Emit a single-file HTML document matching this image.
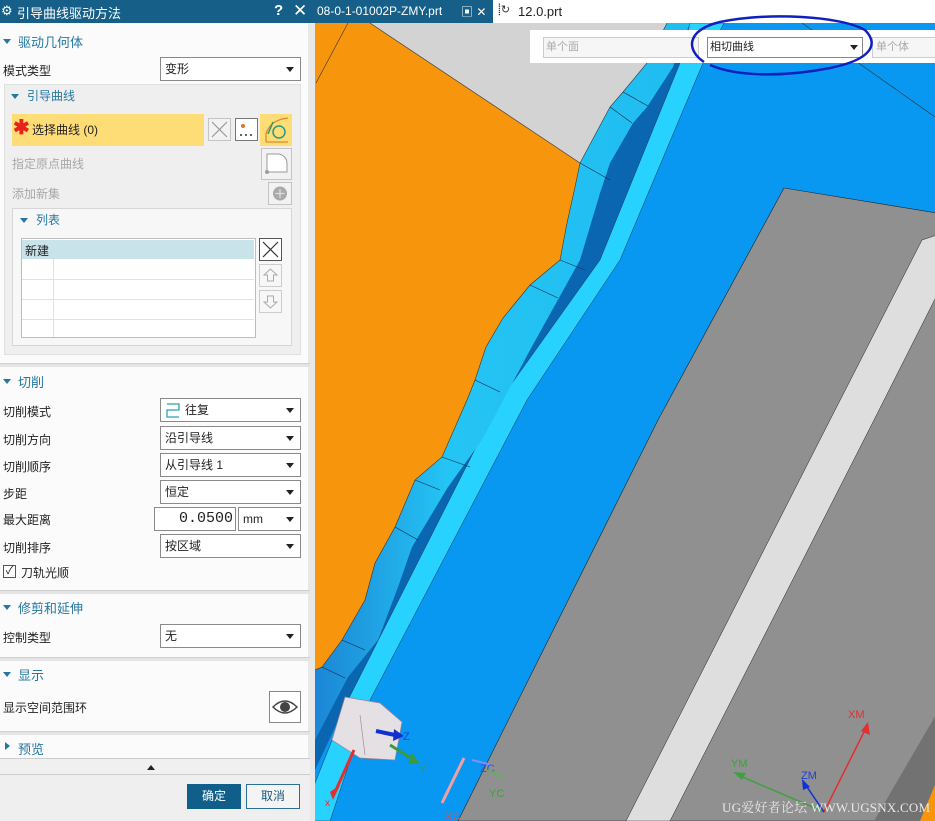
<!DOCTYPE html>
<html><head><meta charset="utf-8"><style>
*{margin:0;padding:0;box-sizing:border-box}
body{width:935px;height:821px;overflow:hidden;position:relative;background:#f0f0f0;font-family:"Liberation Sans","Noto Sans CJK SC",sans-serif;font-size:12px;color:#222}
.a{position:absolute;white-space:nowrap}
.hdr{color:#2478a0;font-size:13px}
.tri{position:absolute;width:0;height:0;border-left:4px solid transparent;border-right:4px solid transparent;border-top:5px solid #2478a0}
.dd{position:absolute;background:#fff;border:1px solid #8a8a8a;height:24px;line-height:22px;padding-left:4px}
.dd:after{content:"";position:absolute;right:6px;top:9px;border-left:4px solid transparent;border-right:4px solid transparent;border-top:5px solid #222}
.sep{position:absolute;left:0;width:310px;height:4px;background:#e4e4e4;border-top:1px solid #d0d0d0}
</style></head><body>
<!-- panel -->
<div class="a" style="left:0;top:0;width:310px;height:821px;background:#fbfbfb"></div>
<div class="a" style="left:308px;top:23px;width:7px;height:798px;background:#e8e8e8"></div>
<div class="a" style="left:0;top:0;width:310px;height:23px;background:#155f88"></div>
<div class="a" style="left:1px;top:3px;color:#fff;font-size:13px">⚙</div>
<div class="a" style="left:17px;top:3px;color:#fff;font-size:13px">引导曲线驱动方法</div>
<div class="a" style="left:274px;top:2px;color:#fff;font-size:15px;font-weight:bold">?</div>
<div class="a" style="left:293px;top:1px;color:#fff;font-size:17px">✕</div>

<div class="tri" style="left:3px;top:39px"></div><div class="a hdr" style="left:18px;top:32px">驱动几何体</div>
<div class="a" style="left:3px;top:62px">模式类型</div>
<div class="dd" style="left:160px;top:57px;width:141px">变形</div>

<div class="a" style="left:4px;top:84px;width:297px;height:271px;background:#efefef;border:1px solid #e0e0e0"></div>
<div class="tri" style="left:11px;top:94px"></div><div class="a hdr" style="left:27px;top:87px;font-size:12px">引导曲线</div>
<div class="a" style="left:12px;top:114px;width:192px;height:32px;background:#fedd77"></div>
<div class="a" style="left:13px;top:115px;color:#e8231c;font-size:20px;font-weight:bold">✱</div>
<div class="a" style="left:32px;top:121px">选择曲线 (0)</div>
<div class="a" style="left:208px;top:118px;width:23px;height:23px;border:1px solid #c4c4c4;background:#f2f2f2"></div>
<svg class="a" style="left:208px;top:118px" width="23" height="23"><path d="M4 4L19 19M19 4L4 19" stroke="#999" stroke-width="1.2"/></svg>
<div class="a" style="left:235px;top:118px;width:23px;height:23px;border:1px solid #777;background:#fff"></div>
<svg class="a" style="left:235px;top:118px" width="23" height="23"><circle cx="8" cy="8" r="2" fill="#d5762a"/><circle cx="6" cy="17" r="1" fill="#333"/><circle cx="11" cy="17" r="1" fill="#333"/><circle cx="16" cy="17" r="1" fill="#333"/></svg>
<div class="a" style="left:260px;top:114px;width:32px;height:32px;background:#fedd77"></div>
<svg class="a" style="left:260px;top:114px" width="32" height="32"><path d="M6 28V20Q10 6 28 4" stroke="#e08a2a" fill="none" stroke-width="1.3"/><path d="M6 28H28" stroke="#e08a2a" stroke-width="1.3"/><path d="M8 20L13 8" stroke="#2a9a7a" stroke-width="1.5"/><circle cx="19" cy="18" r="6" stroke="#2a9a7a" fill="none" stroke-width="1.5"/></svg>
<div class="a" style="left:12px;top:155px;color:#a8a8a8">指定原点曲线</div>
<div class="a" style="left:261px;top:148px;width:31px;height:32px;border:1px solid #c4c4c4;background:#f2f2f2"></div>
<svg class="a" style="left:261px;top:148px" width="31" height="32"><path d="M6 24V6H18Q26 8 26 16V24Z" fill="#fff" stroke="#999"/><circle cx="6" cy="24" r="2" fill="#a99"/></svg>
<div class="a" style="left:12px;top:185px;color:#a8a8a8">添加新集</div>
<div class="a" style="left:268px;top:182px;width:24px;height:23px;border:1px solid #c4c4c4;background:#f2f2f2"></div>
<svg class="a" style="left:268px;top:182px" width="24" height="23"><circle cx="12" cy="11.5" r="7" fill="#aaa"/><path d="M12 7V16M7.5 11.5H16.5" stroke="#ddd" stroke-width="1.3"/></svg>

<div class="a" style="left:12px;top:208px;width:280px;height:138px;background:#f7f7f7;border:1px solid #d6d6d6"></div>
<div class="tri" style="left:20px;top:218px"></div><div class="a hdr" style="left:36px;top:211px;font-size:12px">列表</div>
<div class="a" style="left:21px;top:238px;width:235px;height:100px;background:#fff;border:1px solid #bdbdbd"></div>
<div class="a" style="left:22px;top:240px;width:232px;height:19px;background:#c9e3ea"></div>
<div class="a" style="left:25px;top:242px">新建</div>
<div class="a" style="left:53px;top:259px;width:1px;height:78px;background:#e2e2e2"></div>
<div class="a" style="left:22px;top:279px;width:232px;height:1px;background:#e2e2e2"></div>
<div class="a" style="left:22px;top:299px;width:232px;height:1px;background:#e2e2e2"></div>
<div class="a" style="left:22px;top:319px;width:232px;height:1px;background:#e2e2e2"></div>
<div class="a" style="left:259px;top:238px;width:23px;height:23px;border:1px solid #555;background:#fff"></div>
<svg class="a" style="left:259px;top:238px" width="23" height="23"><path d="M4 4L19 19M19 4L4 19" stroke="#333" stroke-width="1.2"/></svg>
<div class="a" style="left:259px;top:264px;width:23px;height:23px;border:1px solid #ccc"></div>
<svg class="a" style="left:259px;top:264px" width="23" height="23"><path d="M11.5 5L5 11H8.5V17H14.5V11H18Z" fill="none" stroke="#aaa"/></svg>
<div class="a" style="left:259px;top:290px;width:23px;height:23px;border:1px solid #ccc"></div>
<svg class="a" style="left:259px;top:290px" width="23" height="23"><path d="M11.5 18L5 12H8.5V6H14.5V12H18Z" fill="none" stroke="#aaa"/></svg>

<div class="sep" style="top:363px"></div>
<div class="tri" style="left:3px;top:379px"></div><div class="a hdr" style="left:18px;top:372px">切削</div>
<div class="a" style="left:3px;top:403px">切削模式</div>
<div class="dd" style="left:160px;top:398px;width:141px;padding-left:24px">往复</div>
<svg class="a" style="left:165px;top:402px" width="16" height="17"><path d="M2 2H14V8H2V15H14" fill="none" stroke="#2aa0b0" stroke-width="1.3"/></svg>
<div class="a" style="left:3px;top:431px">切削方向</div>
<div class="dd" style="left:160px;top:426px;width:141px">沿引导线</div>
<div class="a" style="left:3px;top:458px">切削顺序</div>
<div class="dd" style="left:160px;top:453px;width:141px">从引导线 1</div>
<div class="a" style="left:3px;top:485px">步距</div>
<div class="dd" style="left:160px;top:480px;width:141px">恒定</div>
<div class="a" style="left:3px;top:511px">最大距离</div>
<div class="a" style="left:154px;top:507px;width:82px;height:24px;border:1px solid #8a8a8a;background:#fff;font-family:'Liberation Mono',monospace;font-size:15px;line-height:22px;text-align:right;padding-right:2px;overflow:hidden">0.0500</div>
<div class="dd" style="left:238px;top:507px;width:63px">mm</div>
<div class="a" style="left:3px;top:539px">切削排序</div>
<div class="dd" style="left:160px;top:534px;width:141px">按区域</div>
<div class="a" style="left:3px;top:565px;width:13px;height:13px;border:1px solid #555;background:#fff;font-size:11px;line-height:11px;text-align:center">✓</div>
<div class="a" style="left:21px;top:564px">刀轨光顺</div>

<div class="sep" style="top:590px"></div>
<div class="tri" style="left:3px;top:605px"></div><div class="a hdr" style="left:18px;top:598px">修剪和延伸</div>
<div class="a" style="left:3px;top:629px">控制类型</div>
<div class="dd" style="left:160px;top:624px;width:141px">无</div>

<div class="sep" style="top:657px"></div>
<div class="tri" style="left:3px;top:672px"></div><div class="a hdr" style="left:18px;top:665px">显示</div>
<div class="a" style="left:3px;top:699px">显示空间范围环</div>
<div class="a" style="left:269px;top:691px;width:32px;height:32px;border:1px solid #888;background:#fff"></div>
<svg class="a" style="left:269px;top:691px" width="32" height="32"><path d="M4 16Q16 4 28 16Q16 28 4 16Z" fill="none" stroke="#444" stroke-width="1.5"/><circle cx="16" cy="16" r="5" fill="#444"/></svg>

<div class="sep" style="top:731px"></div>
<div class="a" style="left:5px;top:742px;border-top:4px solid transparent;border-bottom:4px solid transparent;border-left:5px solid #2478a0;width:0;height:0"></div>
<div class="a hdr" style="left:18px;top:739px">预览</div>
<div class="a" style="left:0;top:758px;width:310px;height:17px;background:#f0f0f0;border-top:1px solid #ccc;border-bottom:1px solid #ccc"></div>
<div class="a" style="left:147px;top:765px;border-left:4px solid transparent;border-right:4px solid transparent;border-bottom:5px solid #222;width:0;height:0"></div>
<div class="a" style="left:0;top:775px;width:310px;height:46px;background:#efefef"></div>
<div class="a" style="left:187px;top:784px;width:54px;height:25px;background:#105f8a;color:#fff;text-align:center;line-height:25px">确定</div>
<div class="a" style="left:246px;top:784px;width:54px;height:25px;border:1px solid #2a6f95;background:#f4f4f4;color:#1a5a80;text-align:center;line-height:23px">取消</div>

<!-- tab bar -->
<div class="a" style="left:310px;top:0;width:625px;height:23px;background:#fff"></div>
<div class="a" style="left:310px;top:0;width:183px;height:23px;background:#155f88"></div>
<div class="a" style="left:317px;top:4px;color:#fff;font-size:12px">08-0-1-01002P-ZMY.prt</div>
<div class="a" style="left:461px;top:3px;color:#fff;font-size:12px">▣ ✕</div>
<div class="a" style="left:498px;top:2px;font-size:11px;color:#333">⸽↻</div>
<div class="a" style="left:518px;top:4px;font-size:13px;color:#222">12.0.prt</div>

<!-- viewport -->
<svg class="a" style="left:315px;top:23px" width="620" height="798" viewBox="315 23 620 798">
<defs>
<linearGradient id="bg1" x1="0" y1="0" x2="1" y2="0"><stop offset="0" stop-color="#1c86d6"/><stop offset="0.35" stop-color="#24c4f4"/><stop offset="1" stop-color="#20bdf0"/></linearGradient>
</defs>
<rect x="315" y="23" width="620" height="798" fill="#0898f2"/>
<path d="M802,23 L935,117" stroke="#333" stroke-width="0.6"/>
<!-- shadow -->
<polygon points="315,23 690,23 680,63 600,260 500,400 348,700 315,770" fill="#0b66b2"/>
<!-- strip -->
<polygon points="690,23 724,23 703,63 620,260 527,400 370,700 330,821 300,821 348,700 500,400 600,260 680,63" fill="#28d2fe" stroke="#1a3a5a" stroke-width="0.5"/>
<!-- bumps -->
<polygon points="315,23 690,23 673,67 647,107 633,123 610,163 600,193 580,260 530,350 482,440 448,487 412,547 398,587 378,640 348,677 315,740" fill="url(#bg1)"/>
<!-- gray -->
<polygon points="315,23 667,23 647,63 623,92 610,107 580,163" fill="#d3d3d3"/>
<!-- orange -->
<polygon points="315,23 370,23 580,163 575,187 567,223 560,260 530,285 503,318 486,347 475,380 467,400 442,457 415,480 395,527 375,563 365,600 342,640 322,667 315,670" fill="#f7960c"/>
<path d="M370,23L580,163L575,187L567,223L560,260L530,285L503,318L486,347L475,380L467,400L442,457L415,480L395,527L375,563L365,600L342,640L322,667L315,670M348,23L316,83M667,23L647,63L623,92L610,107L580,163" stroke="#333" stroke-width="0.6" fill="none"/>
<path d="M623,92L648,106M610,107L632,123M580,163L610,180M560,260L585,270M530,285L558,298M475,380L500,392M442,457L470,467M415,480L440,490M395,527L418,540M342,640L365,650M322,667L345,678" stroke="#1a2a4a" stroke-width="0.6"/>
<!-- gray slab -->
<polygon points="784,188 937,213 937,821 458,821 658,420" fill="#909090" stroke="#222" stroke-width="0.6"/>
<polygon points="922,240 937,235 937,295 874,420 670,821 626,821 830,420" fill="#dedede" stroke="#222" stroke-width="0.5"/>
<polygon points="937,713 937,821 874,821" fill="#727272"/>
<polygon points="920,821 937,780 937,821" fill="#f7960c"/>
<!-- triad left -->
<polygon points="345,697 380,703 402,722 395,760 360,758 332,740" fill="#e4e0e4" stroke="#a08090" stroke-width="0.7"/>
<path d="M360,715L365,755" stroke="#a08090" stroke-width="0.6"/>
<path d="M354,750L336,790" stroke="#e03030" stroke-width="3"/><polygon points="330,792 340,785 333,800" fill="#e03030"/>
<text x="325" y="806" fill="#e03030" font-size="10" font-family="Liberation Sans">x</text>
<path d="M390,745L414,760" stroke="#3a9a40" stroke-width="3"/><polygon points="412,753 420,764 408,764" fill="#3a9a40"/>
<text x="420" y="772" fill="#3a9a40" font-size="9" font-family="Liberation Sans">Y</text>
<path d="M376,731L395,735" stroke="#1030d0" stroke-width="4"/><polygon points="394,729 404,736 393,741" fill="#1030d0"/>
<text x="403" y="740" fill="#2040e0" font-size="11" font-family="Liberation Sans">Z</text>
<path d="M464,758L442,803" stroke="#f0a0a0" stroke-width="3"/>
<text x="445" y="820" fill="#e05050" font-size="11" font-family="Liberation Sans">XC</text>
<path d="M472,760L492,765" stroke="#8090f0" stroke-width="2"/>
<text x="480" y="772" fill="#3050e0" font-size="11" font-family="Liberation Sans">ZC</text>
<path d="M488,770L505,778" stroke="#60b060" stroke-width="2"/>
<text x="489" y="797" fill="#40a040" font-size="11" font-family="Liberation Sans">YC</text>
<!-- triad right -->
<path d="M824,812L866,728" stroke="#e03030" stroke-width="1.5"/><polygon points="868,722 870,735 861,731" fill="#e03030"/>
<text x="848" y="718" fill="#e03030" font-size="11" font-family="Liberation Sans">XM</text>
<path d="M824,812L738,775" stroke="#40a040" stroke-width="1.5"/><polygon points="733,772 746,773 742,780" fill="#40a040"/>
<text x="731" y="767" fill="#40a040" font-size="11" font-family="Liberation Sans">YM</text>
<path d="M824,812L805,784" stroke="#1030d0" stroke-width="1.5"/><polygon points="802,779 810,787 803,790" fill="#1030d0"/>
<text x="801" y="779" fill="#2040e0" font-size="11" font-family="Liberation Sans">ZM</text>
<text x="722" y="812" fill="#e8e8e8" font-size="13" font-family="Liberation Serif,Noto Serif CJK SC,serif" textLength="208">UG爱好者论坛 WWW.UGSNX.COM</text>
</svg>

<!-- toolbar overlay -->
<div class="a" style="left:530px;top:30px;width:405px;height:33px;background:#fff"></div>
<div class="a" style="left:543px;top:37px;width:156px;height:21px;border:1px solid #ccc;background:#f6f6f6;color:#aaa;font-size:11px;line-height:19px;padding-left:2px">单个面</div>
<div class="a" style="left:707px;top:37px;width:156px;height:21px;border:1px solid #888;background:#fff;font-size:11px;line-height:19px;padding-left:2px">相切曲线</div>
<div class="a" style="left:850px;top:45px;border-left:4px solid transparent;border-right:4px solid transparent;border-top:5px solid #222;width:0;height:0"></div>
<div class="a" style="left:872px;top:37px;width:70px;height:21px;border:1px solid #ccc;background:#f6f6f6;color:#aaa;font-size:11px;line-height:19px;padding-left:3px">单个体</div>
<svg class="a" style="left:680px;top:10px" width="200" height="70"><path d="M24,52 C6,40 6,20 40,12 C90,2 160,6 185,20 C200,35 190,50 150,58 C110,66 60,68 30,55" fill="none" stroke="#1020c0" stroke-width="2.5"/></svg>
</body></html>
